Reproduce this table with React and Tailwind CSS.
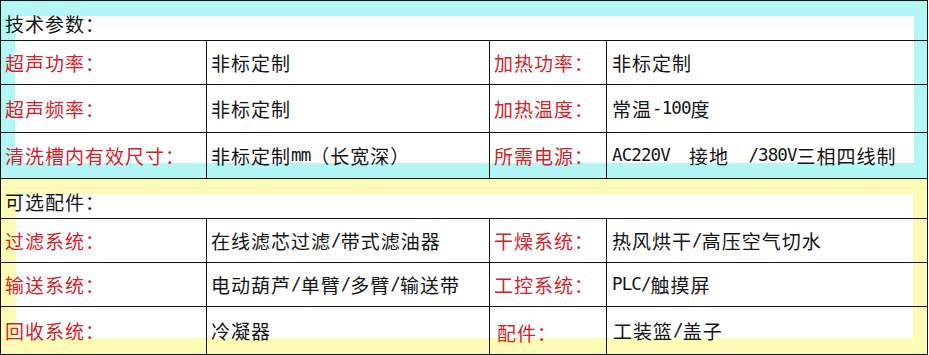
const cjk = "font-['Noto_Sans_CJK_SC','Noto_Sans',sans-serif] text-[19px] tracking-[1px] leading-none";

function Lat({ children }) {
  return <span className="whitespace-pre font-['DejaVu_Sans_Mono',monospace] text-[17.5px] tracking-[-0.9px]">{children}</span>;
}

function Row({ h, label, value, label2, value2, pad3 = 'pl-[4px]', pad4 = 'pl-[5px]' }) {
  return (
    <div className={`relative flex border-b border-[#141414] ${h}`}>
      <div className="flex w-[206px] shrink-0 items-center border-r border-[#141414] pl-[4px] text-[#d4222b]">{label}</div>
      <div className="flex w-[283px] shrink-0 items-center border-r border-[#141414] pl-[4px] text-[#141414]">{value}</div>
      <div className={`flex w-[117px] shrink-0 items-center border-r border-[#141414] text-[#d4222b] ${pad3}`}>{label2}</div>
      <div className={`flex flex-1 items-center text-[#141414] ${pad4}`}>{value2}</div>
    </div>
  );
}

function Title({ children }) {
  return (
    <div className="relative flex h-[40px] items-center border-b border-[#141414] pl-[4px] pt-[5px] text-[#141414]">
      {children}
    </div>
  );
}

export default function App() {
  return (
    <div className="min-h-[355px] bg-white">
      <div className={`w-[928px] border-l border-r border-t border-[#141414] ${cjk}`}>
        {/* 技术参数 */}
        <div className="relative bg-[#b2f6f6]">
          <div className="absolute left-[14px] top-[15px] h-[147px] w-[899px] bg-white" />
          <Title>技术参数：</Title>
          <Row h="h-[44px]" label="超声功率：" value="非标定制" label2="加热功率：" value2="非标定制" />
          <Row h="h-[48px]" label="超声频率：" value="非标定制" label2="加热温度：" value2={<>常温<Lat>-100</Lat>度</>} />
          <Row
            h="h-[46px]"
            label="清洗槽内有效尺寸："
            value={<>非标定制<Lat>mm</Lat>（长宽深）</>}
            label2="所需电源："
            value2={<><Lat>AC220V  </Lat>接地<Lat>  /380V</Lat>三相四线制</>}
          />
        </div>

        {/* 可选配件 */}
        <div className="relative bg-[#fdfbb6]">
          <div className="absolute left-[15px] top-[15px] h-[144px] w-[897px] bg-white" />
          <Title>可选配件：</Title>
          <Row h="h-[44px]" label="过滤系统：" value={<>在线滤芯过滤<Lat>/</Lat>带式滤油器</>} label2="干燥系统：" value2={<>热风烘干<Lat>/</Lat>高压空气切水</>} />
          <Row h="h-[44px]" label="输送系统：" value={<>电动葫芦<Lat>/</Lat>单臂<Lat>/</Lat>多臂<Lat>/</Lat>输送带</>} label2="工控系统：" value2={<><Lat>PLC/</Lat>触摸屏</>} />
          <Row h="h-[48px]" label="回收系统：" value="冷凝器" label2="配件：" value2={<>工装篮<Lat>/</Lat>盖子</>} pad3="pl-[7px] pt-[4px]" pad4="pl-[6px]" />
        </div>
      </div>
    </div>
  );
}
